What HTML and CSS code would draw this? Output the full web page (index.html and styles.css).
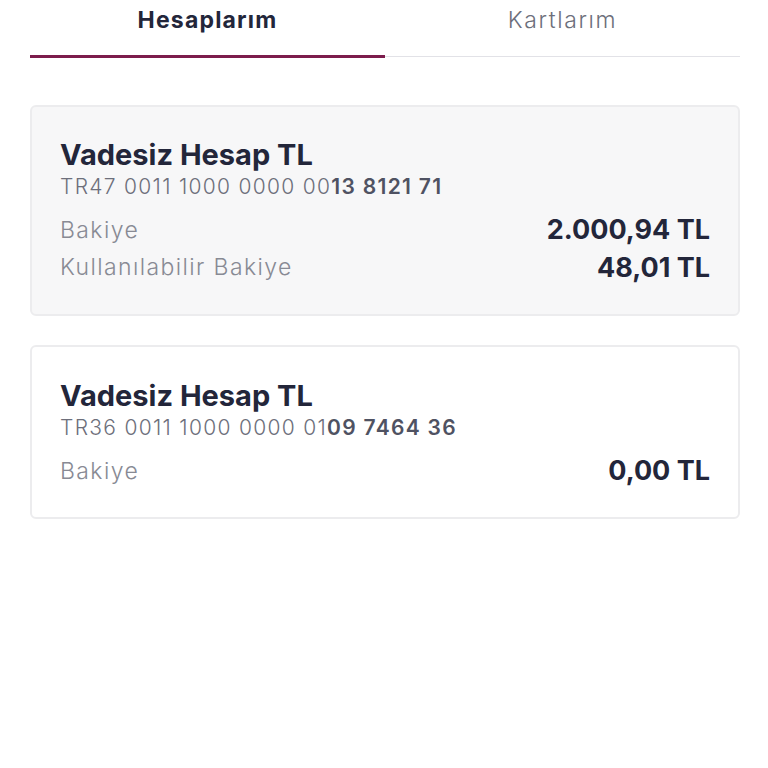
FILE: index.html
```html
<!DOCTYPE html>
<html lang="tr">
<head>
  <meta charset="UTF-8" />
  <meta name="viewport" content="width=device-width, initial-scale=1" />
  <title>Hesaplarım</title>
  <link rel="stylesheet" href="styles.css">
</head>
<body>
  <div class="tabs">
    <div class="tab active">Hesaplarım</div>
    <div class="tab">Kartlarım</div>
  </div>

  <div class="accounts">
    <div class="account-card selected">
      <div class="account-name">Vadesiz Hesap TL</div>
      <div class="iban">TR47 0011 1000 0000 00<strong>13 8121 71</strong></div>
      <div class="balance-row first">
        <span class="label">Bakiye</span>
        <span class="amount">2.000,94 TL</span>
      </div>
      <div class="balance-row">
        <span class="label">Kullanılabilir Bakiye</span>
        <span class="amount">48,01 TL</span>
      </div>
    </div>

    <div class="account-card">
      <div class="account-name">Vadesiz Hesap TL</div>
      <div class="iban">TR36 0011 1000 0000 01<strong>09 7464 36</strong></div>
      <div class="balance-row first">
        <span class="label">Bakiye</span>
        <span class="amount">0,00 TL</span>
      </div>
    </div>
  </div>
</body>
</html>
```

FILE: styles.css
```css
body {
  font-family: 'Inter', 'Noto Sans', sans-serif;
  margin: 0;
  background: #fff;
  color: #23263a;
  padding: 0 28px 0 30px;
}
.tabs {
  display: flex;
  align-items: flex-end;
}
.tab {
  flex: 1;
  text-align: center;
  font-size: 23px;
  font-weight: 300;
  letter-spacing: 1.6px;
  color: #6d6f7b;
  line-height: 40px;
  padding-bottom: 16px;
  border-bottom: 1px solid #e2e2e7;
  margin-bottom: 1px;
}
.tab.active {
  color: #23263a;
  font-weight: bold;
  letter-spacing: 1.2px;
  border-bottom: 3px solid #7c1c4c;
  margin-bottom: 0;
  padding-bottom: 15px;
}
.accounts {
  margin-top: 47px;
}
.account-card {
  background: #fff;
  border: 2px solid #ececee;
  border-radius: 6px;
  padding: 32px 28px 27px 28px;
  margin-bottom: 29px;
}
.account-card.selected {
  background: #f7f7f8;
  padding-top: 31px;
  padding-bottom: 28px;
}
.account-name {
  font-size: 29px;
  font-weight: bold;
  line-height: 34px;
}
.iban {
  font-size: 21px;
  font-weight: 300;
  letter-spacing: 1.3px;
  color: #6d6f7b;
  line-height: 30px;
}
.iban strong {
  font-weight: 600;
  color: #4f5262;
}
.balance-row {
  display: flex;
  justify-content: space-between;
  align-items: center;
  line-height: 37px;
}
.balance-row.first {
  margin-top: 9px;
  line-height: 38px;
}
.label {
  font-size: 23px;
  font-weight: 300;
  letter-spacing: 1.4px;
  color: #888a94;
}
.amount {
  font-size: 27px;
  font-weight: bold;
}
```
